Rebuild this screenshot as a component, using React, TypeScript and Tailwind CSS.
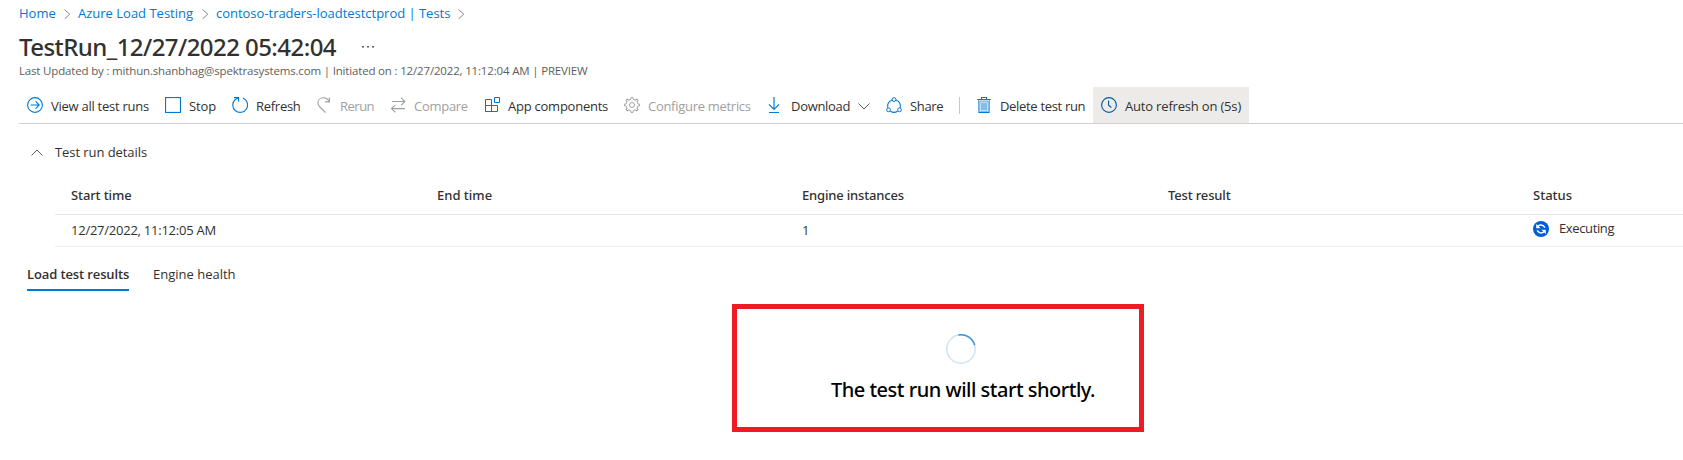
import type { ReactNode } from "react";

const BLUE = "#0078d4";

function Svg({ children, color = BLUE }: { children: ReactNode; color?: string }) {
  return (
    <svg width="16" height="16" viewBox="0 0 16 16" fill="none" stroke={color} className="shrink-0">
      {children}
    </svg>
  );
}

const ArrowCircleIcon = () => (
  <Svg>
    <circle cx="8" cy="8" r="7.4" strokeWidth="1.1" />
    <path d="M3.5 8h8.7M8.6 4.4 12.2 8l-3.6 3.6" strokeWidth="1.1" />
  </Svg>
);

const StopIcon = () => (
  <Svg>
    <rect x="0.5" y="0.5" width="15" height="15" strokeWidth="1.2" />
  </Svg>
);

const RefreshIcon = () => (
  <Svg>
    <path d="M10.8 1.1A7.4 7.4 0 1 1 3.2 2.5L6.3 1" strokeWidth="1.1" />
    <path d="M2 .6h4.6v4.2" strokeWidth="1.1" />
  </Svg>
);

const RerunIcon = () => (
  <Svg color="#a19f9d">
    <path d="M13.4.4v4.5H8.8" strokeWidth="1.1" />
    <path d="M13.2 4.7C11.8 2 9.6.7 7.2.8 4.2.9 1.9 3 1.9 5.9c0 1.9.8 3 2 4.1l5.6 5.6" strokeWidth="1.1" />
  </Svg>
);

const CompareIcon = () => (
  <Svg color="#a19f9d">
    <path d="M2 4.5h12.8M11 .7l3.9 3.8L11 8.3M15 11.6H1.6M5.4 7.8l-3.9 3.8 3.9 3.8" strokeWidth="1.1" />
  </Svg>
);

const ComponentsIcon = () => (
  <Svg>
    <path d="M1.5 2.5h6v12h-6zM1.5 8.5h12v6h-12zM10.5.5h5v5h-5z" />
  </Svg>
);

const TOOTH_ANGLES = [0, 45, 90, 135, 180, 225, 270, 315];

const GearIcon = () => (
  <Svg color="#a19f9d">
    <circle cx="8" cy="8" r="2.5" />
    {TOOTH_ANGLES.map((a) => (
      <path key={a} transform={`rotate(${a} 8 8)`} d="M5.7 2.5 6.8 2.3 7.1.5h1.8L9.2 2.3l1.1.2" strokeWidth="0.95" />
    ))}
  </Svg>
);

const DownloadIcon = () => (
  <Svg>
    <path d="M7 0v12" strokeWidth="1.5" stroke="#3a95dd" />
    <path d="M2 7.4l5 5 5-5M2 15.5h10" strokeWidth="1.2" />
  </Svg>
);

const ShareIcon = () => (
  <Svg>
    <circle cx="8" cy="2.6" r="1.9" />
    <circle cx="2.5" cy="12.8" r="1.9" />
    <circle cx="13.5" cy="12.8" r="1.9" />
    <path d="M6.1 2.9A6.3 6.3 0 0 0 2 10.9M9.9 2.9a6.3 6.3 0 0 1 4.1 8M4.4 14.2a6.4 6.4 0 0 0 7.2 0" strokeWidth="1.1" />
  </Svg>
);

const TrashIcon = () => (
  <Svg>
    <path d="M3 3.5h10v12H3z" fill="#83bdea" stroke="none" />
    <path d="M4.5 5.5h7v8h-7z" stroke="#c5e0f5" />
    <path d="M2.5 3v11.8M13.5 3v11.8" stroke="#69afe5" />
    <path d="M1.2 2.5h13.6M5.4 2.2V.5h5.2v1.7M2.4 15.5h11.2" strokeWidth="1.1" />
  </Svg>
);

const ClockIcon = () => (
  <Svg color="#005b9e">
    <circle cx="8" cy="8" r="7.4" strokeWidth="1.1" />
    <path d="M7.6 3.4v4.8l2.8 2.3" strokeWidth="1.1" />
  </Svg>
);

const ExecutingIcon = () => (
  <svg width="16" height="16" viewBox="0 0 16 16" fill="none" className="shrink-0">
    <circle cx="8" cy="8" r="8" fill="#015cda" />
    <path d="M4.4 5.9C6 3.5 10 3.3 11.9 6.6M11.6 10.1C10 12.5 6 12.7 4.1 9.4" stroke="#fff" strokeWidth="1.5" />
    <path d="M3.2 2.9v4.4h4.5zM12.8 13.1V8.7H8.3z" fill="#fff" />
  </svg>
);

const Chevron = ({ d, w, h, className }: { d: string; w: number; h: number; className: string }) => (
  <svg width={w} height={h} viewBox={`0 0 ${w} ${h}`} fill="none" stroke="currentColor" className={className}>
    <path d={d} />
  </svg>
);

const CrumbChevron = ({ className }: { className: string }) => (
  <Chevron d="M.6.6 5.8 5.2.6 9.8" w={7} h={10} className={`mt-[2px] shrink-0 text-[#8a8886] ${className}`} />
);

interface CommandProps {
  icon: ReactNode;
  label: string;
  text: string;
  className?: string;
  children?: ReactNode;
}

function Command({ icon, label, text, className = "text-[#323130]", children }: CommandProps) {
  return (
    <button className={`flex h-full shrink-0 items-center gap-2 px-2 ${className}`}>
      {icon}
      <span className={`mt-[2px] text-left leading-[18px] whitespace-nowrap ${text}`}>{label}</span>
      {children}
    </button>
  );
}

export default function App() {
  return (
    <div className="h-[460px] w-full overflow-hidden bg-white font-['Open_Sans','Noto_Sans',sans-serif] text-[13px] leading-[18px] text-[#323130]">
      <nav className="flex h-[22px] items-center pt-1 pl-[19px] whitespace-nowrap text-[#0078d4]">
        <a className="w-[37px]">Home</a>
        <CrumbChevron className="ml-2" />
        <a className="ml-[7px] w-[116px]">Azure Load Testing</a>
        <CrumbChevron className="ml-2" />
        <a className="ml-[7px] w-[235px] tracking-[-0.02px]">contoso-traders-loadtestctprod | Tests</a>
        <CrumbChevron className="ml-[7px]" />
      </nav>

      <header className="pl-[19px]">
        <div className="mt-2 flex h-[33px] items-center">
          <h1 className="w-[343px] font-['Noto_Sans',sans-serif] text-2xl leading-8 font-medium tracking-[-0.56px] whitespace-nowrap">
            TestRun_12/27/2022 05:42:04
          </h1>
          <svg width="12" height="2" viewBox="0 0 12 2" fill="#605e5c">
            <path d="M0 0h2v1.5H0zM5 0h2v1.5H5zM10 0h2v1.5h-2z" />
          </svg>
        </div>
        <p className="text-[11.5px] leading-4 tracking-[-0.17px] whitespace-nowrap text-[#605e5c]">
          Last Updated by : mithun.shanbhag@spektrasystems.com | Initiated on : 12/27/2022, 11:12:04 AM | PREVIEW
        </p>
      </header>

      <div className="mt-2 ml-[19px] flex h-[37px] items-center border-b border-[#d2d0ce]">
        <Command icon={<ArrowCircleIcon />} label="View all test runs" text="w-[98px] tracking-[-0.26px]" />
        <Command icon={<StopIcon />} label="Stop" text="w-[27px] tracking-[-0.1px]" />
        <Command icon={<RefreshIcon />} label="Refresh" text="w-[44px] tracking-[-0.28px]" />
        <Command icon={<RerunIcon />} label="Rerun" text="w-[34px] tracking-[-0.5px]" className="text-[#a19f9d]" />
        <Command icon={<CompareIcon />} label="Compare" text="w-[54px] tracking-[-0.28px]" className="text-[#a19f9d]" />
        <Command icon={<ComponentsIcon />} label="App components" text="w-[100px] tracking-[-0.24px]" />
        <Command icon={<GearIcon />} label="Configure metrics" text="w-[103px] tracking-[-0.29px]" className="text-[#a19f9d]" />
        <Command icon={<DownloadIcon />} label="Download" text="w-[59px] tracking-[-0.3px]">
          <Chevron d="M.5.5 6 6 11.5.5" w={12} h={7} className="mt-[3px] text-[#605e5c]" />
        </Command>
        <Command icon={<ShareIcon />} label="Share" text="w-[33px] tracking-[-0.35px]" />
        <div className="mx-2 h-[17px] w-px bg-[#c8c6c4]" />
        <Command icon={<TrashIcon />} label="Delete test run" text="w-[85px] tracking-[-0.32px]" />
        <Command
          icon={<ClockIcon />}
          label="Auto refresh on (5s)"
          text="w-[116px] tracking-[-0.18px]"
          className="bg-[#edebe9] text-[#323130]"
        />
      </div>

      <section>
        <div className="mt-[19px] flex items-center pl-[31px]">
          <Chevron d="M.5 6.5 6 1l5.5 5.5" w={12} h={7} className="mt-[1px] text-[#605e5c]" />
          <h2 className="ml-3 tracking-[-0.07px]">Test run details</h2>
        </div>

        <div className="ml-[55px]">
          <div className="mt-[25px] grid h-[29px] grid-cols-[366px_365px_366px_365px_1fr] border-b border-[#e9e8e7] pl-4 font-['Noto_Sans',sans-serif] font-medium">
            <span className="tracking-[-0.12px]">Start time</span>
            <span>End time</span>
            <span className="tracking-[-0.17px]">Engine instances</span>
            <span className="tracking-[-0.15px]">Test result</span>
            <span>Status</span>
          </div>
          <div className="grid h-8 grid-cols-[366px_365px_366px_365px_1fr] border-b border-[#f0efee] pt-[6px] pl-4">
            <span className="tracking-[-0.24px]">12/27/2022, 11:12:05 AM</span>
            <span />
            <span>1</span>
            <span />
            <span className="-mt-[6px] flex h-[26px] items-center">
              <span className="mt-[2px]">
                <ExecutingIcon />
              </span>
              <span className="ml-[10px] tracking-[-0.38px]">Executing</span>
            </span>
          </div>
        </div>
      </section>

      <div className="mt-[18px] ml-[27px] flex h-[26px] gap-6">
        <div className="h-full w-[102px] border-b-2 border-[#0078d4] font-semibold tracking-[-0.12px] whitespace-nowrap">
          Load test results
        </div>
        <div className="whitespace-nowrap">Engine health</div>
      </div>

      <section className="mt-[13px] ml-[732px] flex h-32 w-[412px] flex-col items-center border-[5px] border-[#ed1c24] pl-[46px] text-black">
        <svg width="30" height="30" viewBox="0 0 30 30" fill="none" strokeWidth="1.5" className="mt-[25px]">
          <circle cx="15" cy="15" r="14.2" stroke="#cfe4f6" />
          <path d="M12.3 1.05A14.2 14.2 0 0 1 28.7 11.3" stroke="#3a95dd" />
        </svg>
        <p className="mt-[12px] pl-[4px] font-['Noto_Sans',sans-serif] text-[20px] leading-7 font-medium tracking-[-0.49px] whitespace-nowrap">
          The test run will start shortly.
        </p>
      </section>
    </div>
  );
}
